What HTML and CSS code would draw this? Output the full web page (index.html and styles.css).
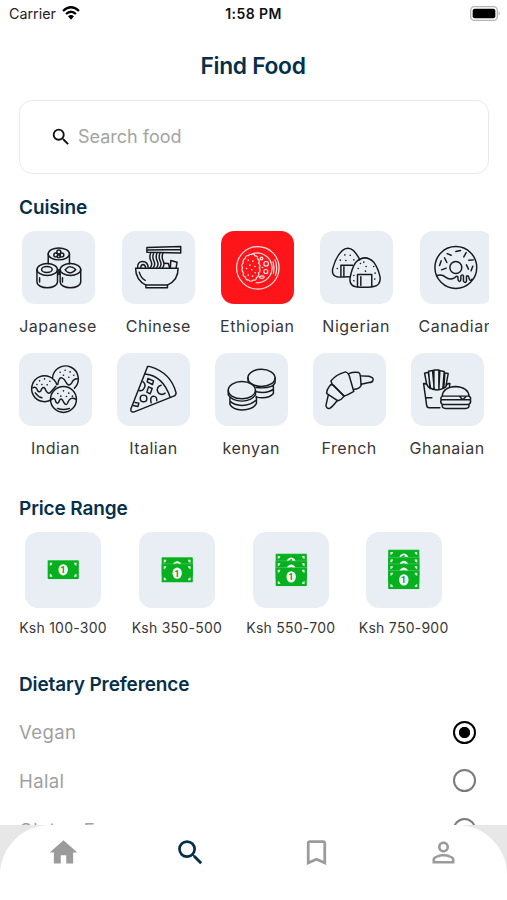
FILE: index.html
```
<!DOCTYPE html>
<html lang="en">
<head>
    <meta charset="UTF-8">
    <meta name="viewport" content="width=device-width, initial-scale=1.0">
    <title>Find Food</title>
    <link rel="stylesheet" href="styles.css">
</head>
<body>
<div class="app">
    <div class="status-bar">
        <div class="carrier">
            <span>Carrier</span>
            <svg class="wifi" viewBox="0 0 54 42">
                <path d="M3 15 Q27 -7 51 15" stroke-width="7"/>
                <path d="M12 24 Q27 10 42 24" stroke-width="7"/>
                <path class="solid" d="M18 31 Q27 23 36 31 L27 41 Z"/>
            </svg>
        </div>
        <div class="time">1:58 PM</div>
        <div class="battery-wrap">
            <svg class="battery" viewBox="0 0 93 45">
                <rect x="2" y="2" width="80" height="41" rx="11" fill="#fff" stroke="#b5b5b5" stroke-width="4"/>
                <rect x="8" y="8" width="68" height="29" rx="6"/>
                <path d="M86 16 Q92 22 86 29 Z" fill="#a5a5a5"/>
            </svg>
        </div>
    </div>

    <main class="content">
        <h1>Find Food</h1>
        <div class="search">
            <svg class="search-icon" viewBox="0 0 24 24">
                <path d="M15.5 14h-.79l-.28-.27A6.471 6.471 0 0 0 16 9.5 6.5 6.5 0 1 0 9.5 16c1.61 0 3.09-.59 4.23-1.57l.27.28v.79l5 4.99L20.49 19l-4.99-5zm-6 0C7.01 14 5 11.99 5 9.5S7.01 5 9.5 5 14 7.01 14 9.5 11.99 14 9.5 14z"/>
            </svg>
            <input type="text" placeholder="Search food">
        </div>

        <h2>Cuisine</h2>
        <div class="cuisines">
            <div class="cuisine-row first">
                <div class="item">
                    <div class="tile">
                        <svg viewBox="36 17 220 220">
                            <ellipse cx="147" cy="86" rx="32" ry="18"/>
                            <path d="M115 86 V116 M179 86 V116"/>
                            <circle cx="147" cy="80" r="6"/><circle cx="138" cy="89" r="6"/><circle cx="156" cy="89" r="6"/><circle cx="147" cy="93" r="5"/>
                            <ellipse cx="112" cy="133" rx="31" ry="18"/>
                            <ellipse cx="111" cy="133" rx="16" ry="9"/>
                            <path d="M81 133 V170 C82 194 142 194 143 170 V133 M89 158 V171"/>
                            <ellipse cx="182" cy="133" rx="31" ry="18"/>
                            <path d="M166 134 Q177 122 183 125 Q195 128 198 134 Q186 145 180 143 Q172 142 166 134 Z"/>
                            <path d="M151 133 V170 C152 194 212 194 213 170 V133 M158 158 V171 M147 134 V148"/>
                        </svg>
                    </div>
                    <div class="label">Japanese</div>
                </div>
                <div class="item">
                    <div class="tile">
                        <svg viewBox="337 17 220 220">
                            <path d="M378 129 H506 Q507 164 474 180 V188 H409 V180 Q378 164 378 129 Z M409 180 H474"/>
                            <path d="M389 141 Q394 159 407 166"/>
                            <path d="M412 67 L514 64 V83 L412 81 Z M412 74 L514 73"/>
                            <path d="M424 82 Q418 96 424 107 T422 128 M433 82 Q427 96 433 107 T431 128 M443 82 Q437 96 443 107 T441 128 M452 82 Q446 96 452 107 T450 128 M461 82 Q455 96 461 107 T459 128"/>
                            <path d="M384 129 Q383 109 399 109 Q415 109 416 128 M393 129 Q394 118 401 118 Q408 120 408 128 M483 126 L484 106 L503 111 L500 128 M464 114 L477 115 L480 127"/>
                        </svg>
                    </div>
                    <div class="label">Chinese</div>
                </div>
                <div class="item">
                    <div class="tile active">
                        <svg viewBox="47 17 220 220">
                            <circle cx="158" cy="128" r="64"/>
                            <path d="M143 85 A45 45 0 1 1 153 173"/>
                            <path d="M138 88 Q147 83 149 92 Q158 91 157 101 Q166 106 160 114 Q168 120 162 128 Q168 137 160 143 Q163 153 154 157 Q153 167 144 165 Q137 172 131 165 Q121 166 121 156 Q111 153 115 143 Q107 136 112 128 Q107 119 114 113 Q111 103 120 100 Q121 90 130 91 Q133 86 138 88 Z"/>
                            <circle cx="183" cy="116" r="7"/><circle cx="182" cy="139" r="6"/><circle cx="169" cy="100" r="4"/>
                            <ellipse cx="170" cy="156" rx="7" ry="4"/>
                            <path d="M210 104 Q219 128 211 151 M204 110 Q209 128 205 145"/>
                            <path class="dots" d="M129 105h0M143 108h0M134 120h0M149 124h0M124 130h0M140 134h0M150 143h0M129 150h0M142 153h0M172 127h0"/>
                        </svg>
                    </div>
                    <div class="label">Ethiopian</div>
                </div>
                <div class="item">
                    <div class="tile">
                        <svg viewBox="345 17 220 220">
                            <path d="M434 155 L402 156 Q377 153 384 128 Q393 95 411 77 Q429 61 447 77 Q458 89 465 104"/>
                            <path d="M408 155 V120 H443 M417 125 V155"/>
                            <path d="M453 111 Q481 85 507 111 Q520 129 526 155 Q529 180 507 184 Q481 189 453 185 Q432 181 436 157 Q441 129 453 111 Z"/>
                            <path d="M458 185 V148 H501 V185 M468 155 V181"/>
                            <path class="dots" d="M420 89h0M436 90h0M406 105h0M423 106h0M447 104h0M397 130h0M467 115h0M484 124h0M460 130h0M482 138h0M507 124h0M447 151h0M511 144h0M510 162h0M447 167h0M477 111h0"/>
                        </svg>
                    </div>
                    <div class="label">Nigerian</div>
                </div>
                <div class="item">
                    <div class="tile">
                        <svg viewBox="337 17 220 220">
                            <circle cx="445" cy="127" r="63"/>
                            <circle cx="445" cy="127" r="18"/>
                            <path d="M388 151 Q404 147 414 156 Q426 166 441 158 Q448 151 451 155 L452 165 Q457 173 460 165 V153 Q464 146 468 152 V168 Q474 177 477 168 V153 Q484 149 485 161 Q489 171 494 162"/>
                            <path d="M419 85 L431 90 M445 79 L459 76 M476 82 L469 95 M484 105 L498 104 M411 98 L418 112 M401 107 L396 121 M402 134 L416 129 M477 119 L483 132 M496 123 L491 137"/>
                        </svg>
                    </div>
                    <div class="label">Canadian</div>
                </div>
            </div>
            <div class="cuisine-row">
                <div class="item">
                    <div class="tile">
                        <svg viewBox="29 23 220 220">
                            <path d="M130 97 A39 39 0 1 1 196 129"/>
                            <path d="M146 118 Q149 95 158 98 Q165 100 173 115 Q180 125 188 113 Q194 99 207 101"/>
                            <path d="M128 163 A39 39 0 1 1 143 118"/>
                            <path d="M70 128 Q82 122 85 137 Q92 145 97 132 Q104 119 111 138 Q119 150 126 139 L140 123"/>
                            <path d="M78 143 Q87 156 98 158"/>
                            <circle cx="163" cy="163" r="39"/>
                            <path d="M125 163 Q137 155 140 170 Q146 180 151 166 Q157 155 164 172 Q172 186 177 170 Q185 153 201 163"/>
                            <path d="M145 190 Q163 197 181 190"/>
                            <path class="dots" d="M153 81h0M168 75h0M183 80h0M163 90h0M179 96h0M194 90h0M91 107h0M106 101h0M122 108h0M98 118h0M114 119h0M83 118h0M146 145h0M163 137h0M179 144h0M155 153h0M172 154h0M190 153h0"/>
                        </svg>
                    </div>
                    <div class="label">Indian</div>
                </div>
                <div class="item">
                    <div class="tile">
                        <svg viewBox="321 23 220 220">
                            <path d="M412 67 Q411 62 421 64 Q484 83 499 143 Q499 151 492 153 L371 201 Q361 202 363 191 Z"/>
                            <path d="M405 86 Q460 91 481 156"/>
                            <path d="M454 120 A14 14 0 1 0 466 144 M399 109 Q411 119 401 132 Q396 138 388 136"/>
                            <circle cx="401" cy="160" r="10"/>
                            <path d="M424 173 Q419 157 430 153 Q442 154 441 167"/>
                            <path d="M414 100 L431 107 L428 118 L412 110 Z M416 125 L427 130 L421 146 L411 141 Z M375 172 L387 174 L384 184 L370 181"/>
                        </svg>
                    </div>
                    <div class="label">Italian</div>
                </div>
                <div class="item">
                    <div class="tile">
                        <svg viewBox="29 23 220 220">
                            <ellipse cx="169" cy="98" rx="41" ry="26"/>
                            <path d="M210 98 V113 Q200 132 153 127 M205 122 V132 Q189 146 153 140 M205 132 V145 Q190 163 153 156 M129 98 V108"/>
                            <ellipse cx="110" cy="135" rx="41" ry="26" class="cover"/>
                            <path d="M69 135 V149 Q80 167 110 168 Q140 167 151 149 V135"/>
                            <path d="M74 158 V168 Q86 181 110 181 Q139 180 154 164 V154 M74 168 V178 Q82 194 110 195 Q144 194 154 175 V164"/>
                        </svg>
                    </div>
                    <div class="label">kenyan</div>
                </div>
                <div class="item">
                    <div class="tile">
                        <svg viewBox="322 23 220 220">
                            <path d="M380 118 L376 107 Q393 87 420 80 Q428 82 431 91 L445 139 Q429 149 416 153 Z"/>
                            <path d="M430 85 Q445 79 460 82 Q464 84 465 94 L467 121 Q460 132 446 132"/>
                            <path d="M465 92 L491 93 Q506 98 503 105 Q501 112 491 112 L467 117"/>
                            <path d="M376 118 Q363 132 363 145 L397 167 Q408 164 416 153 L384 120 Z"/>
                            <path d="M368 150 L361 181 Q363 192 372 190 Q380 186 395 166"/>
                        </svg>
                    </div>
                    <div class="label">French</div>
                </div>
                <div class="item">
                    <div class="tile">
                        <svg viewBox="315 23 220 220">
                            <path d="M402 188 H370 Q363 188 362 180 L353 115 Q363 114 367 125 Q392 143 419 126 Q423 113 432 115 L431 124 M362 158 H378"/>
                            <path d="M362 116 L356 84 L367 81 L374 130 M372 130 L368 78 L380 76 L385 132 M384 132 V74 H399 V132 M399 132 L402 76 L415 79 L411 130 M414 128 L417 83 L427 85 L421 119"/>
                            <path d="M409 153 Q412 126 449 124 Q487 126 490 153 Z"/>
                            <path d="M408 154 Q403 158 406 164 H494 Q497 157 490 153 M462 154 L471 164 L480 155"/>
                            <path d="M406 165 Q402 171 409 178 H489 Q497 173 494 165 M409 179 Q408 190 419 190 H480 Q491 190 490 179"/>
                        </svg>
                    </div>
                    <div class="label">Ghanaian</div>
                </div>
            </div>
        </div>

        <h2 class="price-title">Price Range</h2>
        <svg width="0" height="0" class="sprite">
            <symbol id="bill" viewBox="0 0 94 57">
                <rect width="94" height="57" rx="4" fill="#06b01f"/>
                <path d="M1 .8 H93" stroke="#8ee39a" stroke-width="1.6"/>
                <path d="M7 8 H15 Q14 16 7 17 Z M87 8 H79 Q80 16 87 17 Z M7 50 H15 Q14 42 7 41 Z M87 50 H79 Q80 42 87 41 Z" fill="#e9fbea"/>
                <ellipse cx="47" cy="29" rx="14" ry="17" fill="#fff"/>
                <text x="46" y="39" text-anchor="middle">1</text>
            </symbol>
        </svg>
        <div class="prices">
            <div class="item">
                <div class="tile">
                    <svg viewBox="77 126 227 227"><use href="#bill" x="144" y="210" width="94" height="57"/></svg>
                </div>
                <div class="label">Ksh 100-300</div>
            </div>
            <div class="item">
                <div class="tile">
                    <svg viewBox="418 126 227 227">
                        <use href="#bill" x="485" y="201" width="94" height="57"/>
                        <use href="#bill" x="485" y="220" width="94" height="57"/>
                    </svg>
                </div>
                <div class="label">Ksh 350-500</div>
            </div>
            <div class="item">
                <div class="tile">
                    <svg viewBox="38 126 227 227">
                        <use href="#bill" x="105" y="190" width="94" height="57"/>
                        <use href="#bill" x="105" y="211" width="94" height="57"/>
                        <use href="#bill" x="105" y="231" width="94" height="57"/>
                    </svg>
                </div>
                <div class="label">Ksh 550-700</div>
            </div>
            <div class="item">
                <div class="tile">
                    <svg viewBox="378 126 227 227">
                        <use href="#bill" x="444" y="178" width="94" height="57"/>
                        <use href="#bill" x="444" y="200" width="94" height="57"/>
                        <use href="#bill" x="444" y="220" width="94" height="57"/>
                        <use href="#bill" x="444" y="240" width="94" height="57"/>
                    </svg>
                </div>
                <div class="label">Ksh 750-900</div>
            </div>
        </div>

        <h2 class="diet-title">Dietary Preference</h2>
        <div class="diets">
            <label class="diet"><span>Vegan</span><input type="radio" name="diet" checked></label>
            <label class="diet"><span>Halal</span><input type="radio" name="diet"></label>
            <label class="diet"><span>Gluten Free</span><input type="radio" name="diet"></label>
        </div>
    </main>

    <nav class="tab-wrap">
        <div class="tabs">
            <a class="tab"><svg viewBox="0 0 24 24"><path d="M10 20v-6h4v6h5v-8h3L12 3 2 12h3v8z"/></svg></a>
            <a class="tab active"><svg viewBox="0 0 24 24"><path d="M15.5 14h-.79l-.28-.27A6.471 6.471 0 0 0 16 9.5 6.5 6.5 0 1 0 9.5 16c1.61 0 3.09-.59 4.23-1.57l.27.28v.79l5 4.99L20.49 19l-4.99-5zm-6 0C7.01 14 5 11.99 5 9.5S7.01 5 9.5 5 14 7.01 14 9.5 11.99 14 9.5 14z"/></svg></a>
            <a class="tab"><svg viewBox="0 0 24 24"><path d="M17 3H7c-1.1 0-2 .9-2 2v16l7-3 7 3V5c0-1.1-.9-2-2-2zm0 15l-5-2.18L7 18V5h10v13z"/></svg></a>
            <a class="tab"><svg viewBox="0 0 24 24"><path d="M12 5.9a2.1 2.1 0 1 1 0 4.2 2.1 2.1 0 0 1 0-4.2m0 9c2.97 0 6.1 1.46 6.1 2.1v1.1H5.9V17c0-.64 3.13-2.1 6.1-2.1M12 4C9.79 4 8 5.79 8 8s1.79 4 4 4 4-1.79 4-4-1.79-4-4-4zm0 9c-2.67 0-8 1.34-8 4v3h16v-3c0-2.66-5.33-4-8-4z"/></svg></a>
        </div>
    </nav>
</div>
</body>
</html>
```
FILE: styles.css
```
* {
    box-sizing: border-box;
}
body {
    margin: 0;
    font-family: Inter, Roboto, sans-serif;
    background-color: #fff;
    color: #383838;
}
.app {
    display: flex;
    flex-direction: column;
    height: 900px;
    max-width: 507px;
    overflow: hidden;
}
.status-bar {
    display: grid;
    grid-template-columns: 1fr auto 1fr;
    align-items: center;
    height: 28px;
    padding: 0 6px 0 9px;
    color: #222;
}
.carrier {
    display: flex;
    align-items: center;
    gap: 6px;
    margin-top: -2px;
    font-size: 14.3px;
}
.wifi {
    width: 18px;
    height: 14px;
    margin-top: -1px;
    fill: none;
    stroke: #000;
}
.wifi .solid {
    fill: #000;
    stroke: none;
}
.time {
    margin: -2px 3px 0 0;
    font-size: 14px;
    font-weight: 600;
    letter-spacing: 0.4px;
    color: #111;
}
.battery-wrap {
    display: flex;
    justify-content: flex-end;
    margin-top: -2px;
}
.battery {
    width: 31px;
    height: 15px;
}
.content {
    flex: 0 0 796.5px;
    overflow: hidden;
    padding: 0 18px 0 19px;
}
h1 {
    margin: 12px 0 0;
    padding-right: 2px;
    font-size: 22.8px;
    line-height: 52px;
    font-weight: 600;
    letter-spacing: -0.3px;
    text-align: center;
    color: #06304a;
}
h2 {
    margin: 22px 0 0;
    font-size: 19px;
    line-height: 24px;
    font-weight: 600;
    letter-spacing: -0.12px;
    color: #06304a;
}
.search {
    display: flex;
    align-items: center;
    gap: 6px;
    height: 74px;
    margin-top: 8px;
    padding: 0 30px 1px;
    border: 1.5px solid #e9e9e9;
    border-radius: 13px;
}
.search-icon {
    width: 22px;
    height: 22px;
    margin-top: 1px;
    fill: #111;
}
.search input {
    flex: 1;
    min-width: 0;
    padding: 0;
    border: none;
    outline: none;
    font: 18px Inter, Roboto, sans-serif;
}
.search input::placeholder {
    color: #a3a3a3;
}
.cuisines {
    margin-top: 11px;
    overflow: hidden;
}
.cuisine-row {
    display: grid;
    grid-template-columns: repeat(5, 73px);
    column-gap: 24.9px;
}
.cuisine-row.first {
    grid-template-columns: 78px 73px 75px 73px 77px;
    margin-bottom: 15.5px;
}
.item {
    display: flex;
    flex-direction: column;
    align-items: center;
}
.tile {
    width: 73px;
    height: 73px;
    border-radius: 13px;
    background-color: #e9edf4;
}
.tile svg {
    display: block;
    width: 100%;
    height: 100%;
    fill: none;
    stroke: #161a1e;
    stroke-width: 4.4;
    stroke-linecap: round;
    stroke-linejoin: round;
}
.tile .dots {
    stroke-width: 5;
}
.tile .cover {
    fill: #e9edf4;
}
.tile.active {
    background-color: #fe1519;
}
.tile.active svg {
    stroke: #ffe3e3;
    stroke-width: 3.6;
}
.label {
    margin-top: 11px;
    font-size: 16px;
    line-height: 22px;
    letter-spacing: 0.5px;
    white-space: nowrap;
}
.price-title {
    margin-top: 38.5px;
}
.sprite {
    position: absolute;
}
.sprite text {
    font: bold 28px Roboto, sans-serif;
    fill: #06a01c;
}
.prices {
    display: grid;
    grid-template-columns: 88px 90px 88px 88px;
    column-gap: 24.9px;
    margin-top: 11px;
}
.prices .tile {
    width: 76px;
    height: 76px;
}
.prices .tile svg {
    stroke: none;
}
.prices .label {
    margin-top: 10px;
    font-size: 14px;
    line-height: 20px;
    letter-spacing: 0.25px;
}
.diet-title {
    margin-top: 34.5px;
}
.diets {
    margin-top: 11.3px;
}
.diet {
    display: flex;
    justify-content: space-between;
    align-items: center;
    height: 48.8px;
    padding-right: 13px;
    font-size: 18.5px;
    letter-spacing: 0.4px;
    color: #a0a0a0;
}
.diet input {
    appearance: none;
    width: 23px;
    height: 23px;
    margin: 0;
    border: 2px solid #7a7a7a;
    border-radius: 50%;
}
.diet input:checked {
    border: 2.5px solid #000;
    background: radial-gradient(circle, #000 5.3px, transparent 6px);
}
.tab-wrap {
    flex: 1;
    background-color: #e7e7e7;
}
.tabs {
    display: grid;
    grid-template-columns: repeat(4, 1fr);
    height: 100%;
    padding-top: 11.5px;
    border-radius: 50px 50px 0 0;
    background-color: #fff;
}
.tab svg {
    display: block;
    width: 33px;
    height: 33px;
    margin: 0 auto;
    fill: #9b9b9b;
}
.tab.active svg {
    fill: #06304a;
}
```
